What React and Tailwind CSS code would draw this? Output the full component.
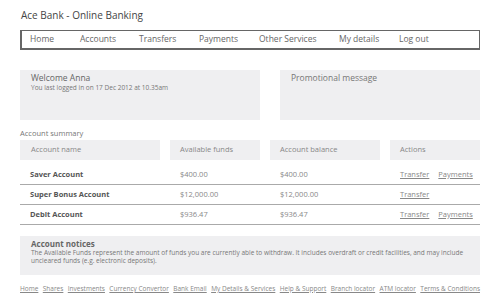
const navItems = [
  { label: 'Home', w: 'w-[50px]' },
  { label: 'Accounts', w: 'w-[59px]' },
  { label: 'Transfers', w: 'w-[60px]' },
  { label: 'Payments', w: 'w-[60px]' },
  { label: 'Other Services', w: 'w-[80px]' },
  { label: 'My details', w: 'w-[60px]' },
  { label: 'Log out', w: 'w-[60px]' },
];

const accounts = [
  { name: 'Saver Account', funds: '$400.00', balance: '$400.00', payments: true },
  { name: 'Super Bonus Account', funds: '$12,000.00', balance: '$12,000.00', payments: false },
  { name: 'Debit Account', funds: '$936.47', balance: '$936.47', payments: true },
];

const footerLinks = [
  'Home',
  'Shares',
  'Investments',
  'Currency Convertor',
  'Bank Email',
  'My Details & Services',
  'Help & Support',
  'Branch locator',
  'ATM locator',
  'Terms & Conditions',
];

const App = () => {
  return (
    <div
      className="w-[500px] h-[300px] bg-white px-5 pt-[7px] text-[#666]"
      style={{ fontFamily: '"Open Sans", "Noto Sans", sans-serif' }}
    >
      <h1 className="text-[10px] leading-[16px] text-[#444] pl-px">Ace Bank - Online Banking</h1>

      <nav className="mt-[7px] h-5 border border-[#666] border-l-2 border-b-2 flex items-center pl-[8px] text-[8.5px] text-[#666]">
        {navItems.map((item) => (
          <span key={item.label} className={item.w}>
            {item.label}
          </span>
        ))}
      </nav>

      <div className="mt-5 flex gap-5">
        <div className="w-[240px] h-[50px] bg-[#efeff1] px-[11px] pt-[2px]">
          <p className="text-[8.5px] leading-[12px] text-[#666]">Welcome Anna</p>
          <p className="text-[6.5px] leading-[8px] text-[#777]">You last logged in on 17 Dec 2012 at 10.35am</p>
        </div>
        <div className="flex-1 h-[50px] bg-[#efeff1] px-[11px] pt-[2px]">
          <p className="text-[8.5px] leading-[12px] text-[#777]">Promotional message</p>
        </div>
      </div>

      <p className="mt-[7px] text-[7.5px] leading-[12px] text-[#777]">Account summary</p>

      <div className="mt-[1px] flex gap-[10px] text-[7.5px] text-[#888]">
        <div className="w-[140px] h-5 bg-[#efeff1] pl-[11px] flex items-center">Account name</div>
        <div className="w-[90px] h-5 bg-[#efeff1] pl-[10px] flex items-center">Available funds</div>
        <div className="w-[110px] h-5 bg-[#efeff1] pl-[10px] flex items-center">Account balance</div>
        <div className="flex-1 h-5 bg-[#efeff1] pl-[10px] flex items-center">Actions</div>
      </div>

      <div className="mt-[5px]">
        {accounts.map((acc) => (
          <div key={acc.name} className="h-5 flex items-center border-b border-[#aaa] text-[7.5px]">
            <div className="w-[150px] pl-[10px] font-bold text-[#555]">{acc.name}</div>
            <div className="w-[100px] pl-[10px] text-[#888]">{acc.funds}</div>
            <div className="w-[120px] pl-[10px] text-[#888]">{acc.balance}</div>
            <div className="flex-1 pl-[10px] flex gap-[9px] text-[#888]">
              <a className="underline">Transfer</a>
              {acc.payments && <a className="underline">Payments</a>}
            </div>
          </div>
        ))}
      </div>

      <div className="mt-[11px] h-[39px] bg-[#efeff1] px-[11px] pt-[2px]">
        <p className="text-[8px] leading-[11px] font-bold text-[#666]">Account notices</p>
        <p className="text-[6.5px] leading-[8px] text-[#777]">
          The Available Funds represent the amount of funds you are currently able to withdraw. It includes overdraft or credit facilities, and may include uncleared funds (e.g. electronic deposits).
        </p>
      </div>

      <div className="mt-[9px] flex justify-between text-[6.5px] text-[#888]">
        {footerLinks.map((link) => (
          <a key={link} className="underline">
            {link}
          </a>
        ))}
      </div>
    </div>
  );
};

export default App;
